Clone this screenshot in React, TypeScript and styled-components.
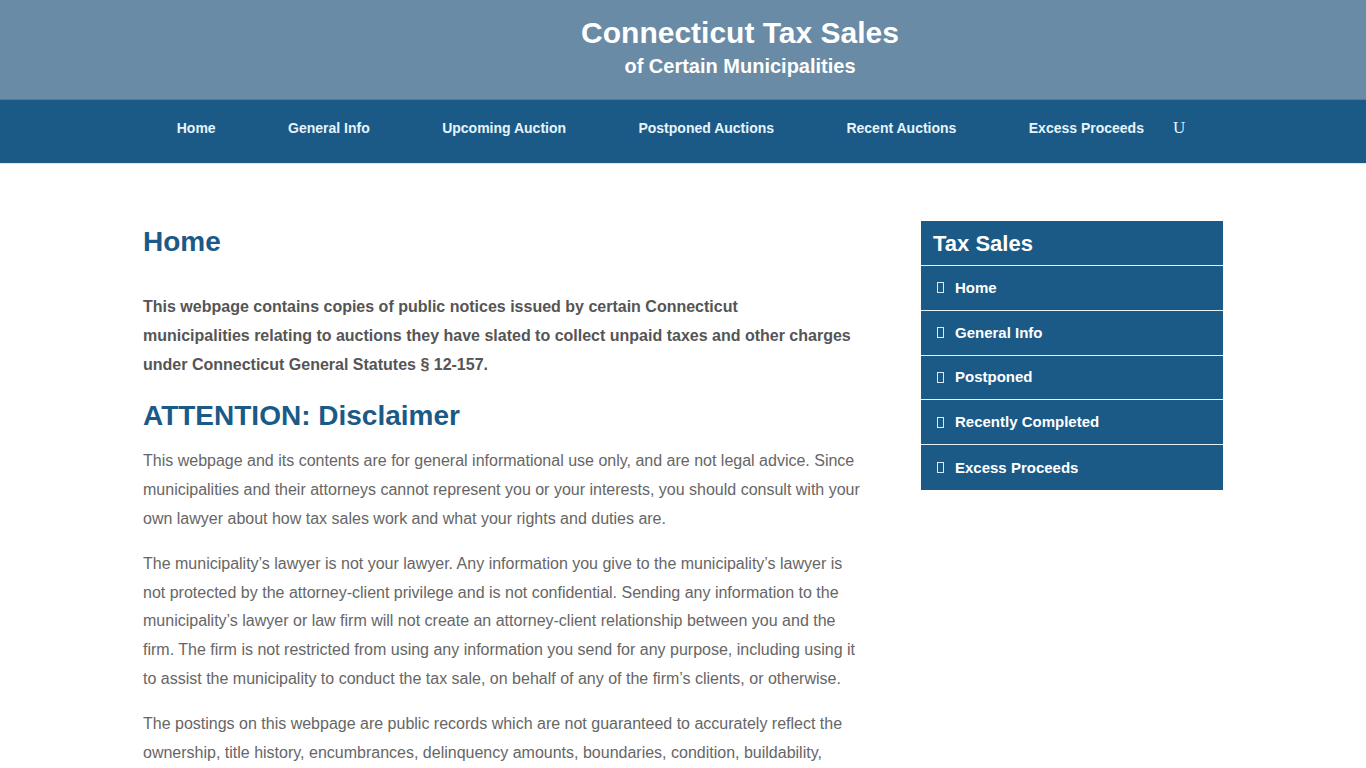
import React from "react";
import styled, { createGlobalStyle } from "styled-components";

const Global = createGlobalStyle`
  html, body { margin: 0; padding: 0; background: #fff; }
  body { font-family: "Liberation Sans", Arial, sans-serif; color: #666; }
  * { box-sizing: border-box; }
`;

const Masthead = styled.header`
  background: #6a8ba5;
  height: 100px;
  display: flex;
  flex-direction: column;
  align-items: center;
  justify-content: flex-start;
  padding-left: 114px;
  border-bottom: 1px solid #4f7d9f;
`;

const SiteTitle = styled.h1`
  margin: 16px 0 0;
  font-size: 30px;
  line-height: 34px;
  font-weight: 700;
  color: #fff;
`;

const SiteSub = styled.div`
  margin-top: 0;
  font-size: 20px;
  line-height: 32px;
  font-weight: 700;
  color: #fff;
`;

const NavBar = styled.nav`
  background: #1b5a87;
  height: 64px;
  display: flex;
  justify-content: center;
  align-items: center;
  padding: 0 4px 8px 0;
  border-bottom: 1px solid #dce8f1;
`;

const NavList = styled.ul`
  list-style: none;
  margin: 0;
  padding: 0;
  display: flex;
  gap: 72.4px;
`;

const NavLink = styled.a`
  font-size: 14px;
  font-weight: 700;
  color: #e6f4fc;
  text-decoration: none;
  line-height: 18px;
`;

const SearchGlyph = styled.span`
  margin-left: 29px;
  font-family: "Liberation Serif", "Times New Roman", serif;
  font-size: 17px;
  line-height: 18px;
  color: #e6f4fc;
`;

const Container = styled.div`
  width: 1080px;
  margin: 0 auto;
  display: flex;
  align-items: flex-start;
  gap: 58px;
  padding-top: 57px;
`;

const Main = styled.main`
  width: 720px;
`;

const PageTitle = styled.h1`
  margin: 0 0 30px;
  font-size: 28px;
  line-height: 42px;
  font-weight: 700;
  color: #1b5a87;
`;

const Heading = styled.h2`
  margin: 0 0 10px;
  font-size: 28px;
  line-height: 42px;
  font-weight: 700;
  color: #1b5a87;
`;

const Para = styled.p<{ $strong?: boolean }>`
  margin: 0;
  padding-bottom: 16px;
  font-size: 16px;
  line-height: 28.8px;
  font-weight: ${(p) => (p.$strong ? 700 : 400)};
  color: ${(p) => (p.$strong ? "#555" : "#666")};
`;

const Sidebar = styled.aside`
  width: 302px;
  background: #1b5a87;
`;

const SideTitle = styled.h3`
  margin: 0;
  height: 45px;
  padding: 1px 12px 0;
  display: flex;
  align-items: center;
  font-size: 22px;
  font-weight: 700;
  color: #fff;
  border-bottom: 1px solid #e8f1f7;
`;

const SideItem = styled.a<{ $last?: boolean }>`
  display: flex;
  align-items: center;
  height: 44.8px;
  padding: 0 0 1px 16px;
  font-size: 15px;
  font-weight: 700;
  color: #fff;
  text-decoration: none;
  border-bottom: ${(p) => (p.$last ? "none" : "1px solid #e8f1f7")};
`;

const Tofu = styled.span`
  display: inline-block;
  width: 7px;
  height: 11px;
  border: 1px solid #d9e8f3;
  margin-right: 11px;
  margin-top: 1px;
`;

const navItems = [
  "Home",
  "General Info",
  "Upcoming Auction",
  "Postponed Auctions",
  "Recent Auctions",
  "Excess Proceeds",
];

const sideItems = ["Home", "General Info", "Postponed", "Recently Completed", "Excess Proceeds"];

export default function App() {
  return (
    <>
      <Global />
      <Masthead>
        <SiteTitle>Connecticut Tax Sales</SiteTitle>
        <SiteSub>of Certain Municipalities</SiteSub>
      </Masthead>
      <NavBar>
        <NavList>
          {navItems.map((n) => (
            <li key={n}>
              <NavLink href="#">{n}</NavLink>
            </li>
          ))}
        </NavList>
        <SearchGlyph>U</SearchGlyph>
      </NavBar>
      <Container>
        <Main>
          <PageTitle>Home</PageTitle>
          <Para $strong>
            This webpage contains copies of public notices issued by certain Connecticut
            <br />
            municipalities relating to auctions they have slated to collect unpaid taxes and other
            charges under Connecticut General Statutes § 12-157.
          </Para>
          <Heading>ATTENTION: Disclaimer</Heading>
          <Para>
            This webpage and its contents are for general informational use only, and are not legal
            advice. Since municipalities and their attorneys cannot represent you or your interests, you
            should consult with your own lawyer about how tax sales work and what your rights and duties
            are.
          </Para>
          <Para>
            The municipality’s lawyer is not your lawyer. Any information you give to the
            municipality’s lawyer is not protected by the attorney-client privilege and is not
            confidential. Sending any information to the municipality’s lawyer or law firm will not
            create an attorney-client relationship between you and the firm. The firm is not restricted
            from using any information you send for any purpose, including using it to assist the
            municipality to conduct the tax sale, on behalf of any of the firm’s clients, or otherwise.
          </Para>
          <Para>
            The postings on this webpage are public records which are not guaranteed to accurately
            reflect the ownership, title history, encumbrances, delinquency amounts, boundaries,
            condition, buildability, zoning or other characteristics of the properties listed.
          </Para>
        </Main>
        <Sidebar>
          <SideTitle>Tax Sales</SideTitle>
          {sideItems.map((s, i) => (
            <SideItem key={s} href="#" $last={i === sideItems.length - 1}>
              <Tofu />
              {s}
            </SideItem>
          ))}
        </Sidebar>
      </Container>
    </>
  );
}
